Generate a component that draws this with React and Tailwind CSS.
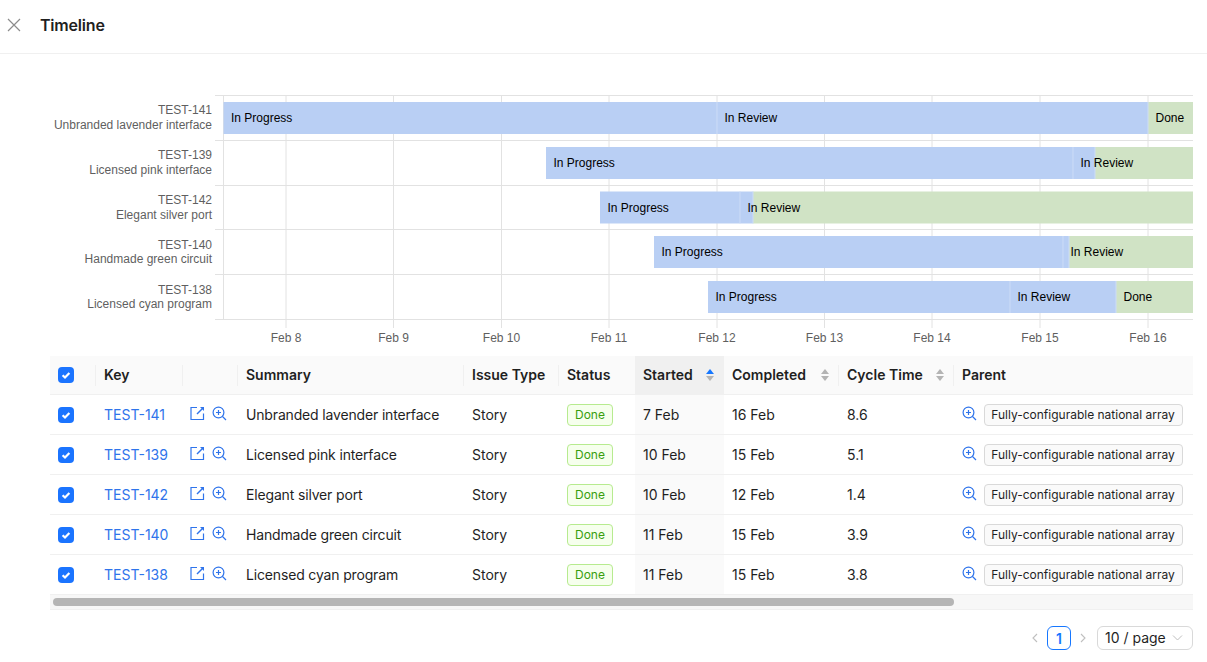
import React from "react";

const sans = '"Liberation Sans", Arial, sans-serif';
const rows = [
  ["TEST-141", "Unbranded lavender interface", "7 Feb", "16 Feb", "8.6"],
  ["TEST-139", "Licensed pink interface", "10 Feb", "15 Feb", "5.1"],
  ["TEST-142", "Elegant silver port", "10 Feb", "12 Feb", "1.4"],
  ["TEST-140", "Handmade green circuit", "11 Feb", "15 Feb", "3.9"],
  ["TEST-138", "Licensed cyan program", "11 Feb", "15 Feb", "3.8"],
];
const BLUE = "#b9cff4";
const GREEN = "#d0e3c5";
const bars = [
  [[223.5, 717, BLUE, "In Progress"], [717, 1148, BLUE, "In Review"], [1148, 1193, GREEN, "Done"]],
  [[546, 1073, BLUE, "In Progress"], [1073, 1095, BLUE, "In Review"], [1095, 1193, GREEN, ""]],
  [[600, 740, BLUE, "In Progress"], [740, 753, BLUE, "In Review"], [753, 1193, GREEN, ""]],
  [[654, 1063, BLUE, "In Progress"], [1063, 1069, BLUE, "In Review"], [1069, 1193, GREEN, ""]],
  [[708, 1010, BLUE, "In Progress"], [1010, 1116, BLUE, "In Review"], [1116, 1193, GREEN, "Done"]],
];
const barY = [102, 147, 191.5, 236, 281];
const lineY = [95.5, 140.5, 185.5, 229.5, 274.5, 319.5];
const dates = [286, 393.5, 501.5, 609, 717, 824.5, 932, 1040, 1148];
const labels = ["Feb 8", "Feb 9", "Feb 10", "Feb 11", "Feb 12", "Feb 13", "Feb 14", "Feb 15", "Feb 16"];
const OFFSET = 54;

function Chart() {
  return (
    <svg width="1207" height="302" viewBox={`0 ${OFFSET} 1207 302`} className="block" style={{ fontFamily: sans }}>
      {lineY.map((y) => <line key={y} x1="215" x2="1193" y1={y} y2={y} stroke="#e2e2e2" />)}
      <line x1="223.5" x2="223.5" y1="95" y2="320" stroke="#e2e2e2" />
      {dates.map((x) => <line key={x} x1={x} x2={x} y1="95" y2="328" stroke="#e2e2e2" />)}
      {bars.map((row, i) => (
        <g key={i}>
          {row.map((b, j) => <rect key={j} x={b[0]} y={barY[i]} width={b[1] - b[0]} height="32" fill={b[2]} />)}
          {row.map((b, j) => j < 2 && <line key={j} x1={b[1]} x2={b[1]} y1={barY[i]} y2={barY[i] + 32} stroke="#ccdcf7" strokeWidth="1" />)}
          {row.map((b, j) => b[3] && <text key={j} x={b[0] + 7.5} y={barY[i] + 20} fontSize="12" fill="#000">{b[3]}</text>)}
        </g>
      ))}
      {rows.map((r, i) => (
        <g key={r[0]} fontSize="12" fill="#5f5f5f" textAnchor="end">
          <text x="212" y={114 + i * 45}>{r[0]}</text>
          <text x="212" y={129 + i * 44.8}>{r[1]}</text>
        </g>
      ))}
      {labels.map((l, i) => <text key={l} x={dates[i]} y="342" fontSize="12" fill="#5f5f5f" textAnchor="middle">{l}</text>)}
    </svg>
  );
}

function Sorter({ active }) {
  return (
    <svg width="10" height="14" viewBox="0 0 10 14" className="shrink-0">
      <path d="M5 1l4 5H1z" fill={active ? "#1677ff" : "#b4b4b4"} />
      <path d="M5 13L1 8h8z" fill="#b4b4b4" />
    </svg>
  );
}

function Check() {
  return (
    <span className="flex h-4 w-4 items-center justify-center rounded-[4px] bg-[#1b74ff]">
      <svg width="12" height="12" viewBox="0 0 12 12" fill="none" stroke="#fff" strokeWidth="2.2"><path d="M2.6 6.2l2.4 2.3 4.4-4.6" /></svg>
    </span>
  );
}

function ExportIcon() {
  return (
    <svg width="15" height="15" viewBox="0 0 15 15" fill="none" stroke="#2f74eb" strokeWidth="1.2">
      <path d="M7 1.5H1v12h12.5V7.5" />
      <path d="M7 8L12.5 2.5" strokeWidth="1.4" />
      <path d="M10 1h4v4z" fill="#2f74eb" stroke="none" />
    </svg>
  );
}

function ZoomIcon() {
  return (
    <svg width="15" height="15" viewBox="0 0 15 15" fill="none" stroke="#2f74eb" strokeWidth="1.2">
      <circle cx="6.5" cy="6.5" r="5.4" />
      <path d="M10.5 10.5l3.5 3.5M6.5 4v5M4 6.5h5" />
    </svg>
  );
}

function Th({ className, children, sort, active, noDivider }) {
  return (
    <div className={`relative flex h-full shrink-0 items-center justify-between pl-2 pr-[9px] ${className}`}>
      {!noDivider && <span className="absolute left-[-1px] top-[9px] h-[21px] w-px bg-[#f0f0f0]" />}
      <span className="pb-[2px]">{children}</span>
      {sort && <Sorter active={active} />}
    </div>
  );
}

function Td({ className, children }) {
  return <div className={`flex h-full shrink-0 items-center pl-2 ${className}`}>{children}</div>;
}

export default function App() {
  return (
    <div className="h-[662px] w-[1207px] overflow-hidden bg-white text-[14px] text-[#1f1f1f]" style={{ fontFamily: 'Inter, sans-serif' }}>
      <header className="flex h-[54px] items-center border-b border-[#f0f0f0] pb-[3px]">
        <svg width="14" height="14" viewBox="0 0 14 14" className="ml-[7px]" stroke="#8c8c8c" strokeWidth="1.2" fill="none">
          <path d="M1 1l12 12M13 1L1 13" />
        </svg>
        <h1 className="ml-[19px] text-[16px] font-semibold leading-6 tracking-[-0.2px]">Timeline</h1>
      </header>
      <Chart />
      <div className="mx-[50px] w-[1143px]">
        <div className="flex h-[39px] items-center border-b border-[#f0f0f0] bg-[#fafafa] font-semibold">
          <div className="flex h-full w-[46px] shrink-0 items-center pl-2"><Check /></div>
          <Th className="w-[87px]">Key</Th>
          <Th className="w-[55px]" />
          <Th className="w-[226px]">Summary</Th>
          <Th className="w-[95px]">Issue Type</Th>
          <Th className="w-[76px]">Status</Th>
          <Th className="w-[89px] bg-[#f0f0f0]" sort active noDivider>Started</Th>
          <Th className="w-[115px]" sort noDivider>Completed</Th>
          <Th className="w-[115px]" sort>Cycle Time</Th>
          <Th className="w-[239px]">Parent</Th>
        </div>
        {rows.map((r) => (
          <div key={r[0]} className="flex h-10 items-center border-b border-[#f0f0f0]">
            <div className="flex h-full w-[46px] shrink-0 items-center pl-2"><Check /></div>
            <Td className="w-[87px] text-[#2f74eb]">{r[0]}</Td>
            <div className="flex h-full w-[55px] shrink-0 items-center gap-[7px] pb-[3px] pl-[7px]"><ExportIcon /><ZoomIcon /></div>
            <Td className="w-[226px] tracking-[-0.16px]">{r[1]}</Td>
            <Td className="w-[95px]">Story</Td>
            <Td className="w-[76px]">
              <span className="rounded-[4px] border border-[#b7eb8f] bg-[#f6ffed] px-[7px] text-[12px] leading-5 text-[#389e0d]">Done</span>
            </Td>
            <Td className="w-[89px] bg-[#fafafa]">{r[2]}</Td>
            <Td className="w-[115px]">{r[3]}</Td>
            <Td className="w-[115px]">{r[4]}</Td>
            <div className="flex h-full w-[239px] shrink-0 items-center pl-2">
              <span className="pb-[3px]"><ZoomIcon /></span>
              <span className="ml-[7px] flex h-[22px] w-[199px] items-center justify-center rounded-[4px] border border-[#d9d9d9] bg-[#fafafa] pr-px text-[12px] whitespace-nowrap">Fully-configurable national array</span>
            </div>
          </div>
        ))}
        <div className="flex h-[15px] items-center border-b border-[#f0f0f0] bg-[#f7f7f7] pl-[3px]">
          <div className="h-2 w-[901px] rounded-full bg-[#b5b5b5]" />
        </div>
        <div className="mt-4 flex h-6 items-center justify-end">
          <svg width="10" height="10" viewBox="0 0 10 10" fill="none" stroke="#bfbfbf" strokeWidth="1.1"><path d="M7 1L3 5l4 4" /></svg>
          <span className="ml-[7px] flex h-6 w-6 items-center justify-center rounded-md border border-[#1677ff] font-semibold text-[#1677ff]">1</span>
          <svg width="10" height="10" viewBox="0 0 10 10" fill="none" stroke="#bfbfbf" strokeWidth="1.1" className="ml-[7px]"><path d="M3 1l4 4-4 4" /></svg>
          <span className="ml-[9px] flex h-6 w-[96px] items-center justify-between rounded-md border border-[#d9d9d9] pb-px pl-[7px] pr-[9px]">
            10 / page
            <svg width="11" height="11" viewBox="0 0 11 11" fill="none" stroke="#bfbfbf" strokeWidth="1"><path d="M1 3.5l4.5 4.5L10 3.5" /></svg>
          </span>
        </div>
      </div>
    </div>
  );
}
